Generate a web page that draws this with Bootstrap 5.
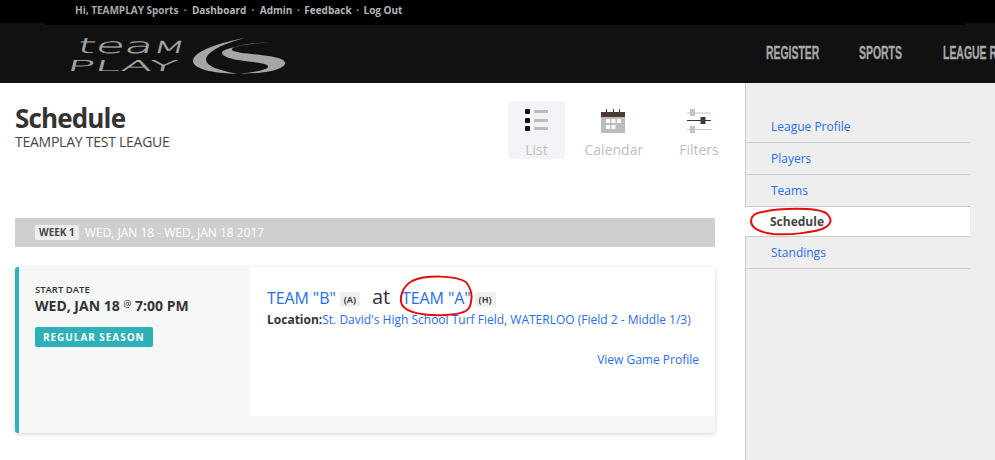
<!DOCTYPE html>
<html lang="en">
<head>
<meta charset="utf-8">
<title>Schedule</title>
<link rel="stylesheet" href="https://cdn.jsdelivr.net/npm/bootstrap@5.3.0/dist/css/bootstrap.min.css">
<style>
html,body{height:460px;overflow:hidden}
body{font-family:"Open Sans","Liberation Sans",sans-serif;color:#333;font-size:12px;background:#fff;position:relative}
a{color:#2a6de8;text-decoration:none}
.tp-top{height:23px;background:#000}
.tp-top-in{width:920px;height:25px;margin-left:45px;background:#000;position:relative;padding-left:30px;font-size:10px;font-weight:700;line-height:21px;color:#aaa;white-space:nowrap}
.tp-top-in a{color:#b5b5b5}
.tp-top-in i{font-style:normal;margin:0 5.300px}
.tp-top-in i.tp-nar{margin:0 4.500px}
.tp-head{height:60px;background:#111;padding-left:65px;overflow:hidden}
.tp-logo{width:222px;height:40px;margin-top:13px;flex:none}
.tp-menu{margin-left:479px;font-family:"Liberation Sans","Arial",sans-serif;font-weight:700;font-size:18px;white-space:nowrap;padding-top:1px;-webkit-text-stroke:.3px #a8a8a8}
.tp-menu a{color:#a8a8a8;display:inline-block;transform:scaleX(.58);transform-origin:0 50%;flex:none}
.tp-m1{margin-right:1px}
.tp-m2{margin-right:10px}
.tp-body{height:377px}
.tp-main{width:745px;padding:0 30px 0 15px;flex:none}
.tp-title{font-size:26px;font-weight:700;line-height:30px;letter-spacing:-.85px;margin:20px 0 0;color:#333}
.tp-sub{font-size:14px;line-height:18px;letter-spacing:-.25px;color:#444}
.tp-views{padding-top:18px;margin-right:-12.500px}
.tp-view{width:57px;height:58px;border-radius:3px;color:#c2bebb;font-size:14px;line-height:18px;padding-top:8px;text-align:center;white-space:nowrap}
.tp-view svg{display:block;margin:0 auto 8px}
.tp-view.on{background:#f3f4f8}
.tp-gap1{margin-left:19.500px}
.tp-gap2{margin-left:29px}
.tp-week{height:29px;background:#cfcfcf;margin-top:59px;padding-left:20px;color:#fff;font-size:12px}
.tp-wk{background:#eee;color:#444;font-weight:700;font-size:10px;line-height:15px;padding:0 4px;border-radius:2px;margin-right:6px}
.tp-game{margin-top:20px;height:166px;background:#f5f6f6;border-left:4px solid #2eb0b8;border-radius:3px;box-shadow:0 1px 4px rgba(0,0,0,.18)}
.tp-when{width:231px;flex:none;padding:16px 0 0 16px}
.tp-cap{font-size:9.500px;font-weight:600;line-height:13px}
.tp-dt{font-size:14px;font-weight:700;line-height:20px;white-space:nowrap;margin-top:-2px}
.tp-dt small{font-size:9px;font-weight:400;vertical-align:4px}
.tp-kind{display:block;width:118px;background:#2eb0b8;color:#fff;font-size:10px;font-weight:700;letter-spacing:.95px;line-height:20px;padding:0 8px;border-radius:2px;margin-top:11px;white-space:nowrap}
.tp-det{background:#fff;height:149px;padding:19px 16px 0 17px}
.tp-teams{font-size:16px;line-height:22px;white-space:nowrap;letter-spacing:-.1px}
.tp-tag{display:inline-block;background:#eee;border-radius:3px;font-size:9px;font-weight:700;line-height:15px;padding:0 4px;color:#444;vertical-align:1px;letter-spacing:0}
.tp-at{font-size:20px;margin:0 12px;color:#333}
.tp-loc{font-size:12px;line-height:16px;white-space:nowrap;margin-top:3px}
.tp-view-link{font-size:12px;margin-top:23px;text-align:right}
.tp-side{width:250px;background:#eee;border-left:1px solid #ccc;padding-top:28px;flex:none}
.tp-side ul{width:224px;list-style:none;margin:0;padding:0}
.tp-side li{height:32px;border-bottom:1px solid #ccc;padding-left:25px;line-height:32px;font-size:12px}
.tp-side li.on{background:#fff;margin-left:-1px;padding-left:25px;font-weight:700;color:#444;height:30px;line-height:30px;font-size:12px}
.tp-marks{position:absolute;left:0;top:0;pointer-events:none}
</style>
</head>
<body>
<div class="tp-top"><div class="tp-top-in">Hi, TEAMPLAY Sports<i>·</i><a href="#">Dashboard</a><i>·</i><a href="#">Admin</a><i class="tp-nar">·</i><a href="#">Feedback</a><i class="tp-nar">·</i><a href="#">Log Out</a></div></div>
<header class="tp-head d-flex">
  <svg class="tp-logo" viewBox="65 36 222 40" xmlns="http://www.w3.org/2000/svg">
    <g fill="#a6a6a6" stroke="#a6a6a6" stroke-width=".25" font-family="DejaVu Sans" font-weight="200">
      <text transform="translate(76,53) skewX(-14)" font-size="21" textLength="108" lengthAdjust="spacingAndGlyphs">tea<tspan font-size="16.500">M</tspan></text>
      <text transform="translate(66,71) skewX(-14)" font-size="15" textLength="110" lengthAdjust="spacingAndGlyphs">PLAY</text>
    </g>
    <path fill="#a6a6a6" d="M245 38C222 42 193 51 193 61C193 69 212 73 238 74C222 71 207 67 206 60C206 51 226 43 245 38Z"/>
    <path fill="#a6a6a6" d="M270 42.500C250 43 230 46 232 50C236 55 285 54 285 63C285 70 262 74 240 73.500C260 72 272 68 267 65C262 61 225 62 222 53C221 49 245 43.500 270 42.500Z"/>
  </svg>
  <nav class="tp-menu d-flex align-items-center"><a class="tp-m1" href="#">REGISTER</a><a class="tp-m2" href="#">SPORTS</a><a href="#">LEAGUE RESOURCES</a></nav>
</header>
<div class="tp-body d-flex">
  <main class="tp-main">
    <div class="d-flex justify-content-between">
      <div>
        <h1 class="tp-title">Schedule</h1>
        <div class="tp-sub">TEAMPLAY TEST LEAGUE</div>
      </div>
      <div class="tp-views d-flex">
        <div class="tp-view on">
          <svg width="24" height="24" viewBox="0 0 24 24"><g fill="#111"><rect x="0" y="0" width="5" height="5" rx="1"/><rect x="0" y="9" width="5" height="5" rx="1"/><rect x="0" y="17" width="5" height="5" rx="1"/></g><g fill="#bdbdbd"><rect x="9" y="1" width="14" height="3"/><rect x="9" y="10" width="14" height="3"/><rect x="9" y="18" width="14" height="3"/></g></svg>
          List
        </div>
        <div class="tp-view tp-gap1">
          <svg width="26" height="24" viewBox="0 0 26 24"><rect x="1" y="3" width="24" height="21" fill="#bcbcbc"/><rect x="1" y="3" width="24" height="5" fill="#4a3a3a"/><g fill="#4a3a3a"><rect x="6" y="0" width="1" height="3"/><rect x="13" y="0" width="1" height="3"/><rect x="19" y="0" width="1" height="3"/></g><g fill="#fff"><rect x="6" y="10" width="4" height="4"/><rect x="11.500" y="10" width="4" height="4"/><rect x="17" y="10" width="4" height="4"/><rect x="6" y="16" width="4" height="4"/><rect x="11.500" y="16" width="4" height="4"/></g></svg>
          Calendar
        </div>
        <div class="tp-view tp-gap2">
          <svg width="26" height="24" viewBox="-1 0 26 24"><g fill="#c4c4c4"><rect x="0" y="3.500" width="24" height="1"/><rect x="0" y="20" width="24" height="1"/><rect x="3" y="0" width="5" height="7"/><rect x="3" y="17" width="5" height="7"/></g><rect x="0" y="11" width="24" height="1" fill="#333"/><rect x="13.500" y="8" width="5" height="7" fill="#4a3434"/></svg>
          Filters
        </div>
      </div>
    </div>
    <div class="tp-week d-flex align-items-center"><span class="tp-wk">WEEK 1</span>WED, JAN 18 - WED, JAN 18 2017</div>
    <article class="tp-game d-flex">
      <div class="tp-when">
        <div class="tp-cap">START DATE</div>
        <div class="tp-dt">WED, JAN 18 <small>@</small> 7:00 PM</div>
        <span class="tp-kind">REGULAR SEASON</span>
      </div>
      <div class="tp-det flex-grow-1">
        <div class="tp-teams"><a href="#">TEAM "B"</a> <span class="tp-tag">(A)</span><span class="tp-at">at</span><a href="#">TEAM "A"</a> <span class="tp-tag">(H)</span></div>
        <div class="tp-loc"><b>Location:</b><a href="#">St. David's High School Turf Field, WATERLOO (Field 2 - Middle 1/3)</a></div>
        <div class="tp-view-link"><a href="#">View Game Profile</a></div>
      </div>
    </article>
  </main>
  <aside class="tp-side">
    <ul>
      <li><a href="#">League Profile</a></li>
      <li><a href="#">Players</a></li>
      <li><a href="#">Teams</a></li>
      <li class="on">Schedule</li>
      <li><a href="#">Standings</a></li>
    </ul>
  </aside>
</div>
<svg class="tp-marks" width="995" height="460" viewBox="0 0 995 460" fill="none" stroke="#e01010" stroke-width="2">
  <path d="M466 282C455 275 425 275 412 281C402 287 399 298 402 305C407 313 425 316 445 315C462 314 470 312 471 302C473 293 470 287 466 282"/>
  <path d="M762 212C780 208 815 207 826 213C833 219 832 225 822 229C810 233 790 235 773 234C758 232 751 227 751 221C751 216 755 213 762 212"/>
</svg>
<script src="https://cdn.jsdelivr.net/npm/bootstrap@5.3.0/dist/js/bootstrap.bundle.min.js"></script>
</body>
</html>
